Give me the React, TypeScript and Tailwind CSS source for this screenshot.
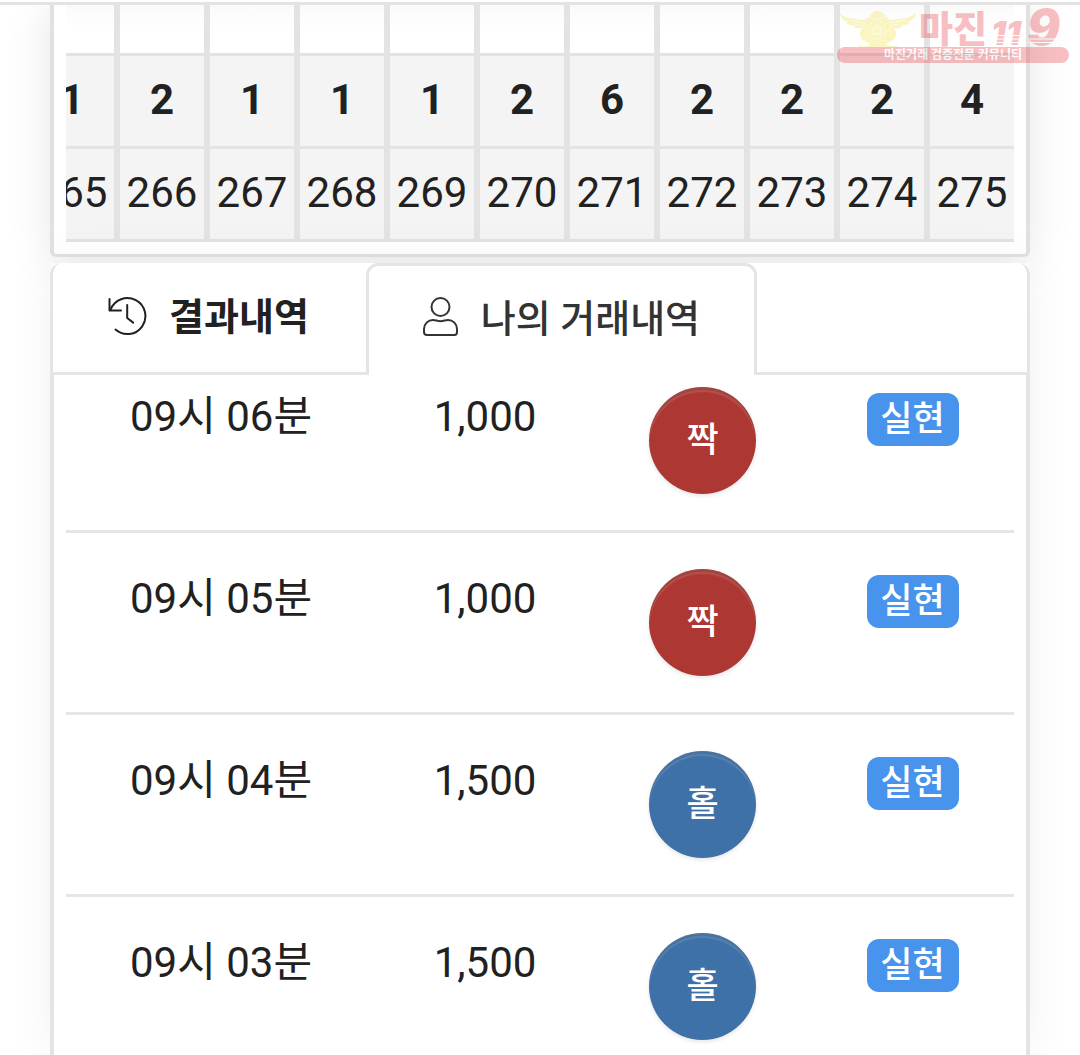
const counts = ['1', '2', '1', '1', '1', '2', '6', '2', '2', '2', '4'];
const rounds = ['265', '266', '267', '268', '269', '270', '271', '272', '273', '274', '275'];

type Trade = { time: string; amount: string; pick: '짝' | '홀'; status: string };

const trades: Trade[] = [
  { time: '09시 06분', amount: '1,000', pick: '짝', status: '실현' },
  { time: '09시 05분', amount: '1,000', pick: '짝', status: '실현' },
  { time: '09시 04분', amount: '1,500', pick: '홀', status: '실현' },
  { time: '09시 03분', amount: '1,500', pick: '홀', status: '실현' },
];

function HistoryIcon() {
  return (
    <svg viewBox="0 0 40 40" className="mb-1 size-10 shrink-0" fill="none" stroke="currentColor" strokeWidth="2" strokeLinecap="round" strokeLinejoin="round" aria-hidden="true">
      <path d="M8.5 33.6A18 18 0 1 0 3.6 13.6" />
      <path d="M2.5 3v11.500H14" />
      <path d="M20.2 9v13l6 4.6" />
    </svg>
  );
}

function PersonIcon() {
  return (
    <svg viewBox="0 1 40 40" className="mb-1 size-10 shrink-0" fill="none" stroke="currentColor" strokeWidth="2" strokeLinejoin="round" aria-hidden="true">
      <circle cx="19.5" cy="11" r="9" />
      <path d="M12 24C15 24 16 25.2 19.5 25.2S24 24 27 24C32 24 36 28 36 33V36Q36 39 33.5 39H6Q3 39 3 36V33C3 28 7 24 12 24Z" />
    </svg>
  );
}

function Watermark() {
  return (
    <svg viewBox="0 0 233 56" className="pointer-events-none absolute top-2 right-2.5 h-14 w-[233px] overflow-visible opacity-30" role="img" aria-label="마진119">
      <g fill="#f0df35">
        <path d="M2 5q4 4 9 5l16 2q4-1 6-4l2-3q5-4 11 0l2 3q2 3 6 4l16-2q5-1 9-5-2 7-9 9l3 1q-4 3-9 2l1 2q-5 2-8 1l2 4q1 7-6 10l-4 2 2 2q6 1 10-1-2 4-8 4l-7-1q-5 2-10 0l-7 1q-6 0-8-4 4 2 10 1l2-2-4-2q-7-3-6-10l2-4q-3 1-8-1l1-2q-5 1-9-2l3-1Q4 12 2 5Z" />
      </g>
      <g fill="none" stroke="#fff" strokeWidth="1" opacity="0.7">
        <circle cx="40" cy="22" r="9" strokeDasharray="3 2" />
        <path d="M40 16l2 4h4l-3 3 1 4-4-2-4 2 1-4-3-3h4zM12 12l16 3M68 12l-16 3M18 16l10 2M62 16l-10 2M32 9q8 4 16 0" />
      </g>
      <g fill="#e8303a">
        <text x="82" y="35" fontSize="37" fontWeight="900" className="font-['Noto_Sans_CJK_KR',sans-serif]">마진</text>
        <text x="154" y="37" fontSize="33" fontWeight="900" fontStyle="italic" className="font-['Inter',sans-serif]">11</text>
        <text x="190" y="37" fontSize="49" fontWeight="900" fontStyle="italic" className="font-['Inter',sans-serif]">9</text>
        <rect y="39" width="232" height="16" rx="8" />
      </g>
      <path d="M152 27.500h36M152 31h74M152 34.500h74" stroke="#fff" strokeWidth="1" />
      <text x="116" y="51" fontSize="12" fontWeight="700" textAnchor="middle" fill="#fff" className="font-['Noto_Sans_CJK_KR',sans-serif]">마진거래 검증전문 커뮤니티</text>
    </svg>
  );
}

function RoundTable() {
  const cell = 'h-[93px] w-[90px] border-x-[3px] border-b-[3px] border-[#e3e3e3] bg-[#f4f4f4] p-0 pb-1 text-center last:w-[87px] last:border-r-0';
  return (
    <section className="rounded-b-md border-x-4 border-b-[3px] border-[#e1e1e1] bg-white px-3 pb-3 shadow-[0_0_45px_rgba(0,0,0,0.1)]">
      <div className="flex justify-end overflow-hidden">
        <table className="w-[987px] shrink-0 table-fixed border-separate border-spacing-0 text-[42px] leading-[63px]">
          <tbody>
            <tr>
              {rounds.map((r) => (
                <td key={r} className="h-[51px] w-[90px] border-x-[3px] border-b-[3px] border-[#e3e3e3] bg-gradient-to-b from-[#fafafa] to-white to-50% p-0 last:w-[87px] last:border-r-0" />
              ))}
            </tr>
            <tr>
              {counts.map((c, i) => (
                <td key={rounds[i]} className={`${cell} font-bold`}>{c}</td>
              ))}
            </tr>
            <tr>
              {rounds.map((r) => (
                <td key={r} className={cell}>{r}</td>
              ))}
            </tr>
          </tbody>
        </table>
      </div>
    </section>
  );
}

function TradeTable() {
  return (
    <table className="w-full table-fixed border-separate border-spacing-0">
      <colgroup>
        <col className="w-[310px]" />
        <col className="w-[218px]" />
        <col className="w-[217px]" />
        <col className="w-[203px]" />
      </colgroup>
      <tbody className="text-center align-top text-[42px] leading-[60px]">
        {trades.map((t) => (
          <tr key={t.time} className="group">
            <td className="border-b-[3px] border-[#e6e6e6] p-0 pt-9 group-first:pt-3 group-last:border-b-0">{t.time}</td>
            <td className="border-b-[3px] border-[#e6e6e6] p-0 pt-9 group-first:pt-3 group-last:border-b-0">{t.amount}</td>
            <td className="border-b-[3px] border-[#e6e6e6] p-0 pt-9 pb-9 group-first:pt-3 group-last:border-b-0 group-last:pb-4">
              <span
                className={`mx-auto flex size-[107px] items-center justify-center rounded-full text-[35px] font-medium text-white shadow-[inset_0_3px_0_rgba(0,0,0,0.12),inset_0_5px_1px_rgba(255,255,255,0.12),0_2px_4px_rgba(0,0,0,0.1)] ${t.pick === '짝' ? 'bg-[#ad3833]' : 'bg-[#3e71a8]'}`}
              >
                {t.pick}
              </span>
            </td>
            <td className="border-b-[3px] border-[#e6e6e6] p-0 pt-[42px] group-first:pt-[18px] group-last:border-b-0">
              <span className="mx-auto flex h-[53px] w-[92px] items-center justify-center rounded-xl bg-[#4893ec] text-[35px] font-medium text-white">
                {t.status}
              </span>
            </td>
          </tr>
        ))}
      </tbody>
    </table>
  );
}

export default function App() {
  return (
    <div className="relative flex min-h-screen flex-col overflow-hidden bg-white font-['Roboto','Noto_Sans_CJK_KR',sans-serif] text-[#212121]">
      <header className="relative z-10 h-[5px] border-b-[3px] border-[#e3e3e3] bg-white" />
      <main className="mx-[50px] flex grow flex-col">
        <RoundTable />
        <section className="mt-1.5 flex grow flex-col shadow-[0_0_45px_rgba(0,0,0,0.06)]">
          <div role="tablist" className="flex rounded-t-xl border-[3px] border-t-0 border-[#e5e5e5] bg-white text-[38px] leading-[57px]">
            <button role="tab" aria-selected="false" className="flex h-[109px] items-center gap-[22px] pr-[57px] pl-[54px] font-bold">
              <HistoryIcon />
              결과내역
            </button>
            <button role="tab" aria-selected="true" className="-mb-[3px] flex h-28 items-center gap-5 rounded-t-xl border-[3px] border-b-0 border-[#e5e5e5] bg-white pr-[54px] pb-[3px] pl-[52px] font-medium text-[#333]">
              <PersonIcon />
              나의 거래내역
            </button>
          </div>
          <div role="tabpanel" className="grow border-x-4 border-[#e4e4e4] bg-white px-3">
            <TradeTable />
          </div>
        </section>
      </main>
      <Watermark />
    </div>
  );
}
